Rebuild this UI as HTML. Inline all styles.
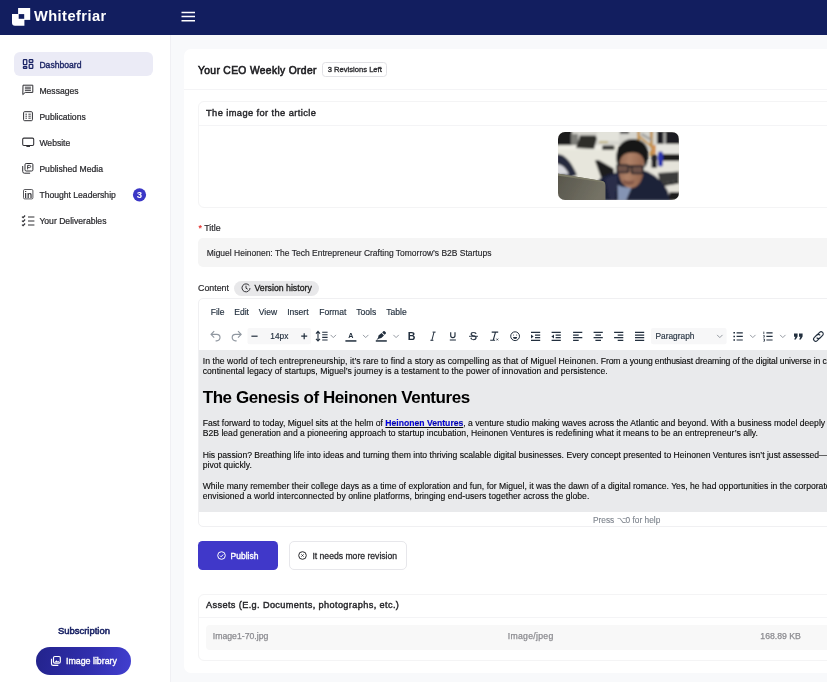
<!DOCTYPE html>
<html lang="en">
<head>
<meta charset="utf-8">
<title>Whitefriar – Your CEO Weekly Order</title>
<style>
*{box-sizing:border-box;margin:0;padding:0}
html,body{width:827px;height:682px;overflow:hidden}
body{will-change:transform;font-family:"Liberation Sans",sans-serif;background:#f8f9fb;color:#1d1d1f;position:relative;-webkit-font-smoothing:antialiased}
.abs{position:absolute}
.t{position:absolute;white-space:nowrap;line-height:1}
/* header */
#hdr{position:absolute;left:0;top:0;width:827px;height:35px;background:#121e5f}
#brand{left:34px;top:8.6px;font-size:14.6px;font-weight:700;color:#fff;letter-spacing:0.45px}
/* sidebar */
#side{position:absolute;left:0;top:35px;width:171px;height:647px;background:#fff;border-right:1px solid #f0f0f4}
.nav{position:absolute;left:14px;width:139px;height:24px;border-radius:6px}
.nav.act{background:#ebebf6}
.nav .lbl{position:absolute;left:25.4px;top:9px;font-size:8.6px;line-height:1;color:#2a2a2e;white-space:nowrap;-webkit-text-stroke:0.22px currentColor}
.nav.act .lbl{color:#1c2566;-webkit-text-stroke:0.35px #1c2566}
.nav svg{position:absolute;left:8px;top:6px;width:12px;height:12px}
/* main card */
#card{position:absolute;left:184px;top:49px;width:700px;height:623.6px;background:#fff;border-radius:7px}
.hr{position:absolute;height:1px;background:#f4f4f6}
.box{position:absolute;border:1px solid #f4f4f5;border-radius:6px;background:#fff}

.mi{top:258.6px;font-size:8.55px;color:#222f3e;-webkit-text-stroke:0.15px #222f3e;margin-left:-0.3px}
#edbody p{position:absolute;left:3.7px;-webkit-text-stroke:0.12px #0a0a0a;font-size:8.62px;line-height:10px;color:#0a0a0a;white-space:nowrap}
#edbody h2{position:absolute;left:3.7px;font-size:17px;line-height:18px;font-weight:700;color:#000;white-space:nowrap;letter-spacing:-0.42px}
#edbody a{color:#0000ee;text-decoration:underline;font-weight:700}
.as{font-size:8.7px;color:#8b8b90;-webkit-text-stroke:0.25px #8b8b90}
</style>
</head>
<body>
<div id="hdr">
  <svg class="abs" style="left:0;top:0" width="40" height="35" viewBox="0 0 40 35">
    <rect x="18.1" y="8" width="12.1" height="11.9" fill="#fff"/>
    <path d="M12 13.9h12.4v11.8H15a3 3 0 0 1-3-3z" fill="#fff"/>
    <rect x="18.7" y="14.1" width="5.5" height="4.7" fill="#121e5f"/>
  </svg>
  <div class="t" id="brand">Whitefriar</div>
  <svg class="abs" style="left:181px;top:11px" width="14" height="12" viewBox="0 0 14 12"><path d="M0.500 1.500h13.500M0.500 5.600h13.500M0.500 9.700h13.500" stroke="#fff" stroke-width="1.500" fill="none"/></svg>
</div>

<div id="side">
  <div class="nav act" style="top:17px"><span class="lbl">Dashboard</span></div>
  <div class="nav" style="top:43px"><span class="lbl">Messages</span></div>
  <div class="nav" style="top:69px"><span class="lbl">Publications</span></div>
  <div class="nav" style="top:95px"><span class="lbl">Website</span></div>
  <div class="nav" style="top:121px"><span class="lbl">Published Media</span></div>
  <div class="nav" style="top:147px"><span class="lbl">Thought Leadership</span></div>
  <div class="nav" style="top:173px"><span class="lbl">Your Deliverables</span></div>
</div>

<div id="card">
  <div class="t" id="ttl" style="left:14px;top:16.9px;font-size:10.3px;letter-spacing:0.34px;color:#1e1e22;-webkit-text-stroke:0.6px #1e1e22">Your CEO Weekly Order</div>
  <div class="abs" id="badge" style="left:138px;top:13px;width:65px;height:15px;border:1px solid #e1e1e5;border-radius:3.5px"></div>
  <div class="t" id="badget" style="left:143.7px;top:17px;font-size:7.62px;color:#2a2a2e;-webkit-text-stroke:0.32px #2a2a2e">3 Revisions Left</div>
  <div class="hr" style="left:0;top:40px;width:700px"></div>

  <!-- image box -->
  <div class="box" style="left:14px;top:52px;width:700px;height:107px"></div>
  <div class="t" id="imgh" style="left:22px;top:59.8px;font-size:9.3px;letter-spacing:0.4px;color:#26262a;-webkit-text-stroke:0.4px #26262a">The image for the article</div>
  <div class="hr" style="left:14px;top:75.5px;width:700px"></div>
  <div class="abs" id="photo" style="left:374.3px;top:82.5px;width:121px;height:68px;border-radius:7px;overflow:hidden;background:#dedcd4">
  <svg width="121" height="68" viewBox="0 0 121 68" style="display:block">
    <defs>
      <filter id="bl" x="-5%" y="-5%" width="110%" height="110%"><feGaussianBlur stdDeviation="0.8"/></filter>
      <filter id="bl2" x="-5%" y="-5%" width="110%" height="110%"><feGaussianBlur stdDeviation="0.5"/></filter>
      <linearGradient id="mon" x1="0" y1="0" x2="1" y2="0.3"><stop offset="0" stop-color="#57554b"/><stop offset="1" stop-color="#747265"/></linearGradient>
      <linearGradient id="skin" x1="0" y1="0" x2="1" y2="0.2"><stop offset="0" stop-color="#8e6450"/><stop offset="0.45" stop-color="#b08268"/><stop offset="1" stop-color="#94664f"/></linearGradient>
    </defs>
    <rect width="121" height="68" fill="#e4e2d9"/>
    <g filter="url(#bl)">
      <!-- back wall / far desks -->
      <rect x="-2" y="-2" width="125" height="15" fill="#d6d5cf"/>
      <rect x="-2" y="-2" width="16" height="15.500" fill="#1d1d1e"/>
      <rect x="13" y="2" width="7" height="11" fill="#7d7d78"/>
      <rect x="39" y="-1" width="22" height="10" fill="#e3e3db"/>
      <rect x="62" y="-1" width="9" height="2.500" fill="#2b2b2d"/>
      <rect x="44" y="13.500" width="12.500" height="4" rx="1.500" fill="#3b3b37"/>
      <rect x="41" y="9.500" width="9" height="1.500" fill="#b5a65e"/>
      <!-- near desk -->
      <path d="M-1 13.500h58l2 4v30H-1z" fill="#e7e6dc"/>
      <path d="M-1 13.500h56v4H-1z" fill="#eeede5"/>
      <path d="M18 16l4-12.500h15.500l1.500 3-3 10.500z" fill="#2f2f2c"/>
      <rect x="44" y="13.500" width="12.500" height="4.500" rx="1.500" fill="#3b3b37"/>
      <!-- rack -->
      <rect x="79.400" y="-1" width="2.400" height="15" fill="#c08c3e"/>
      <rect x="92" y="-1" width="2.600" height="25" fill="#bd8a3d"/>
      <path d="M81 3l11 9v2.500l-11-9z" fill="#c3924a"/>
      <path d="M84 1l10 6-1 2-10-6z" fill="#9a9a98"/>
      <path d="M84 10l9 6v3l-9-6z" fill="#cfcfcb"/>
      <rect x="94.500" y="13" width="3" height="9" fill="#d08a4a"/>
      <!-- right back -->
      <rect x="99" y="-1" width="23" height="13.500" fill="#1f1f20"/>
      <rect x="105.400" y="0" width="2.400" height="12" fill="#b9b9b6"/>
      <rect x="99" y="12" width="23" height="10.500" fill="#e6e5df"/>
      <rect x="105" y="22" width="17" height="7" fill="#1d1d1e"/>
      <rect x="86" y="29" width="36" height="34" fill="#e5e3da"/>
      <rect x="100" y="19.500" width="5" height="15" rx="2" fill="#2a35ae"/>
      <rect x="93.500" y="22.500" width="5.500" height="13.500" rx="1.500" fill="#222226"/>
      <path d="M100 41l21-1.500v9l-19 3.500z" fill="#3a3a3a"/>
      <path d="M102 52l19-3.500v3l-18 3z" fill="#262626"/>
      <path d="M109 68l3-8h10v8z" fill="#1f1f1f"/>
      <!-- left person -->
      <path d="M-1 22c8 0 15 9 20 21l-6 2H-1z" fill="#262a3c"/>
      <path d="M-1 32c5 .5 9 4 12 10.500H-1z" fill="#d9d9de"/>
      <!-- chair behind -->
      <path d="M37 28.500l3.500-.5 15 8.500 1 9H43z" fill="#1b1b1f"/>
      <!-- sweater -->
      <path d="M38 51c5-7 13-9.500 21-10.500l27-2c10 3 19 11 24 21l2 9H40z" fill="#1e2138"/>
      <path d="M47 47c4-3 9-4 13-4.500l-3 25h-5z" fill="#2a2e4a"/>
      <!-- t-shirt -->
      <path d="M59.500 52.500c4 3 10 4 15 1l-6.500 15H60z" fill="#8594b4"/>
      <!-- face -->
      <path d="M60.500 30c0-7 5-11 12.500-11s13 4 13 11l-1 12c-1 8-6 14-12 14s-11-6-12-14z" fill="url(#skin)"/>
      <!-- hair -->
      <path d="M59.500 33c-4-14 3-26 15-26 13 0 19 10 14.500 25l-2.500 4c.5-10-3-15.500-12-15.500-8 0-13 3.500-13 12.500z" fill="#151517"/>
      <!-- glasses -->
      <path d="M58.500 32.500l27.500 1.500v2l-27.500-1.500z" fill="#1b1b22"/>
      <rect x="59" y="33" width="11.500" height="7.500" rx="1.800" fill="#6e5248" stroke="#1e1e26" stroke-width="1.700"/>
      <rect x="73.500" y="34" width="11.500" height="7.500" rx="1.800" fill="#6e5248" stroke="#1e1e26" stroke-width="1.700"/>
      <!-- mouth / beard shade -->
      <path d="M64.500 47.500c3 1.500 8 2 12 .5l-1 4c-3 1.500-7 1.500-10 0z" fill="#85594a"/>
    </g>
    <g filter="url(#bl2)">
      <path d="M-1 41.500l44 7.300c3 .5 4.500 2 4.500 5V69H-1z" fill="url(#mon)"/>
      <path d="M-1 41.500l44 7.300c2 .3 3.300 1 4 2.500l-1.500.5c-.6-1-1.500-1.500-3-1.700L-1 43.500z" fill="#7d7b68"/>
    </g>
  </svg>
</div>

  <!-- title -->
  <div class="t" style="left:14.600px;top:175.300px;font-size:8.800px;font-weight:700;color:#e53935">*</div>
  <div class="t" id="titlel" style="left:20.2px;top:174.9px;font-size:8.85px;color:#2a2a2e;-webkit-text-stroke:0.2px #2a2a2e">Title</div>
  <div class="abs" style="left:14px;top:189px;width:700px;height:29px;background:#f5f5f5;border-radius:5px"></div>
  <div class="t" id="titlev" style="left:22.7px;top:199.6px;font-size:8.49px;color:#26262a;-webkit-text-stroke:0.15px #26262a">Miguel Heinonen: The Tech Entrepreneur Crafting Tomorrow’s B2B Startups</div>

  <!-- content label -->
  <div class="t" id="contl" style="left:14px;top:234.8px;font-size:8.85px;color:#2a2a2e;-webkit-text-stroke:0.2px #2a2a2e">Content</div>
  <div class="abs" style="left:50px;top:232px;width:84.7px;height:14.6px;background:#e8e8ea;border-radius:8px"></div>
  <svg class="abs" style="left:56.6px;top:234.4px" width="10" height="10" viewBox="0 0 10 10"><path d="M8.3 2.6A4 4 0 1 0 9 5" fill="none" stroke="#2a2a2e" stroke-width=".95"/><path d="M5 2.7v2.500l1.700 1" fill="none" stroke="#2a2a2e" stroke-width=".95"/></svg>
  <div class="t" id="verh" style="left:70.5px;top:234.8px;font-size:8.74px;color:#222;-webkit-text-stroke:0.3px #222">Version history</div>

  <!-- editor -->
  <div class="box" style="left:14px;top:249px;width:700px;height:229px;border-radius:5px;border-color:#f0f0f2"></div>
  <div id="menubar">
    <span class="t mi" style="left:27px">File</span>
    <span class="t mi" style="left:50.5px">Edit</span>
    <span class="t mi" style="left:75px">View</span>
    <span class="t mi" style="left:103.5px">Insert</span>
    <span class="t mi" style="left:135.5px">Format</span>
    <span class="t mi" style="left:172.5px">Tools</span>
    <span class="t mi" style="left:202.5px">Table</span>
  </div>
  
  <div class="abs" id="edbody" style="left:15px;top:301px;width:699px;height:162px;background:#e9eaec;overflow:hidden">
    <p style="top:5.5px"><span style="letter-spacing:0.059px">In the world of tech entrepreneurship, it’s rare to find a story as compelling as that of Miguel Heinonen. </span><span style="letter-spacing:-0.11px">From a young enthusiast dreaming of the digital universe in cross-</span><br><span style="letter-spacing:0.038px">continental legacy of startups, Miguel’s journey is a testament to the power of innovation and persistence.</span></p>
    <h2 style="top:38.8px">The Genesis of Heinonen Ventures</h2>
    <p style="top:67.8px">Fast forward to today, Miguel sits at the helm of <a>Heinonen Ventures</a>, a venture studio making waves across the Atlantic and beyond. With a business model deeply rooted in<br><span style="letter-spacing:0.01px">B2B lead generation and a pioneering approach to startup incubation, Heinonen Ventures is redefining what it means to be an entrepreneur’s ally.</span></p>
    <p style="top:99.6px">His passion? Breathing life into ideas and turning them into thriving scalable digital businesses. Every concept presented to Heinonen Ventures isn’t just assessed—it’s<br><span style="letter-spacing:0.04px">pivot quickly.</span></p>
    <p style="top:131.2px;letter-spacing:0.009px">While many remember their college days as a time of exploration and fun, for Miguel, it was the dawn of a digital romance. Yes, he had opportunities in the corporate world, but he<br><span style="letter-spacing:0.038px">envisioned a world interconnected by online platforms, bringing end-users together across the globe.</span></p>
  </div>
  <div class="t" id="help" style="left:409px;top:466.5px;font-size:8.34px;color:#7f858e;-webkit-text-stroke:0.12px #7f858e">Press ⌥0 for help</div>

  <!-- buttons -->
  <div class="abs" style="left:14px;top:492px;width:80px;height:29px;background:#4038c9;border-radius:4.5px"></div>
  <svg class="abs" style="left:32.5px;top:502px" width="9" height="9" viewBox="0 0 9 9"><circle cx="4.5" cy="4.5" r="3.8" fill="none" stroke="#fff" stroke-width="1"/><path d="M2.900 4.600l1.200 1.200 2.100-2.300" fill="none" stroke="#fff" stroke-width="1"/></svg>
  <div class="t" id="pub" style="left:46.6px;top:502.5px;font-size:8.48px;color:#fff;-webkit-text-stroke:0.35px #fff">Publish</div>
  <div class="abs" style="left:104.8px;top:492px;width:118.4px;height:29px;background:#fff;border:1px solid #e7e7eb;border-radius:5px"></div>
  <svg class="abs" style="left:114px;top:502px" width="9" height="9" viewBox="0 0 9 9"><circle cx="4.5" cy="4.5" r="3.8" fill="none" stroke="#2a2a2e" stroke-width="1"/><path d="M3.400 3.400l2.200 2.200M5.600 3.400L3.400 5.600" fill="none" stroke="#2a2a2e" stroke-width=".9"/></svg>
  <div class="t" id="rev" style="left:128.4px;top:502.5px;font-size:8.62px;color:#2a2a2e;-webkit-text-stroke:0.28px #2a2a2e">It needs more revision</div>

  <!-- assets -->
  <div class="box" style="left:14px;top:545px;width:700px;height:67px"></div>
  <div class="t" id="assh" style="left:22px;top:551.6px;font-size:9.2px;letter-spacing:0.37px;color:#26262a;-webkit-text-stroke:0.4px #26262a">Assets (E.g. Documents, photographs, etc.)</div>
  <div class="hr" style="left:14px;top:568px;width:700px"></div>
  <div class="abs" style="left:21.5px;top:575.5px;width:700px;height:25.3px;background:#f8f8f8;border-radius:4px"></div>
  <div class="t as" id="as1" style="left:28.8px;top:583px">Image1-70.jpg</div>
  <div class="t as" id="as2" style="left:323.7px;top:583px;letter-spacing:0.29px">Image/jpeg</div>
  <div class="t as" id="as3" style="left:576.3px;top:583px">168.89 KB</div>
</div>

<svg class="abs" id="tb" style="left:0;top:0;pointer-events:none" width="827" height="682" viewBox="0 0 827 682" font-family="Liberation Sans, sans-serif">
<path d="M214.2 331.2l-3.2 3.2 3.2 3.2M211.2 334.4h5.6a3.2 3.2 0 0 1 0 6.4h-1.2" fill="none" stroke="#9097a0" stroke-width="1.15" stroke-linejoin="round"/>
<path d="M238 331.2l3.2 3.2-3.2 3.2M241 334.4h-5.6a3.2 3.2 0 0 0 0 6.4h1.2" fill="none" stroke="#9097a0" stroke-width="1.15" stroke-linejoin="round"/>
<rect x="247.5" y="328" width="63.5" height="16.2" rx="2" fill="#f7f7f8"/>
<path d="M251.4 336.2h6.2" stroke="#222f3e" stroke-width="1.2"/>
<path d="M301.2 336.2h6M304.2 333.2v6" stroke="#222f3e" stroke-width="1.2"/>
<text x="279.3" y="339.3" font-size="8.3" fill="#222f3e" stroke="#222f3e" stroke-width=".15" text-anchor="middle">14px</text>
<path d="M318 331.6v9.2M316 333.6l2-2.2 2 2.2M316 338.8l2 2.2 2-2.2" fill="none" stroke="#222f3e" stroke-width="1.1"/>
<path d="M322.2 332.2h5.400M322.2 334.800h5.400M322.2 337.400h5.400M322.2 340h5.400" stroke="#222f3e" stroke-width="1.100"/>
<path d="M330.6 334.9l2.7 2.7 2.7-2.7" fill="none" stroke="#8a9099" stroke-width="0.9"/>
<text x="350.9" y="338.3" font-size="7.2" font-weight="700" fill="#222f3e" text-anchor="middle">A</text>
<rect x="345.4" y="340.2" width="11" height="1.5" fill="#222f3e"/>
<path d="M363.0 334.9l2.7 2.7 2.7-2.7" fill="none" stroke="#8a9099" stroke-width="0.9"/>
<path d="M383.300 331.300a1 1 0 0 1 1.400 0l1 1a1 1 0 0 1 0 1.400l-1.100 1.100-2.400-2.400zM381.600 333l2.400 2.400-2.700 2.700-2.600.6-.9.900h-1.300l1.500-1.700.5-2.300z" fill="#222f3e"/>
<rect x="375.8" y="340.2" width="11" height="1.5" fill="#222f3e"/>
<path d="M393.40000000000003 334.9l2.7 2.7 2.7-2.7" fill="none" stroke="#8a9099" stroke-width="0.9"/>
<text x="411.5" y="339.9" font-size="10.6" font-weight="700" fill="#222f3e" text-anchor="middle">B</text>
<path d="M434 332.100L431.900 340.300M432.600 332.100h3M430.400 340.300h3" fill="none" stroke="#222f3e" stroke-width="1"/>
<path d="M450.700 332.300v3.100a2.150 2.150 0 0 0 4.300 0v-3.100" fill="none" stroke="#222f3e" stroke-width="1.150"/><path d="M449.800 340h6.100" stroke="#222f3e" stroke-width="1.050"/>
<text x="473.5" y="340" font-size="10.4" fill="#222f3e" stroke="#222f3e" stroke-width=".25" text-anchor="middle">S</text><path d="M469 336.3h9" stroke="#222f3e" stroke-width="0.9"/>
<path d="M491.700 332.100h6.500M495.500 332.100L493.300 340M490.200 340.300h4.800" fill="none" stroke="#222f3e" stroke-width="1.100"/><path d="M496.400 338.600l1.800 1.800M498.200 338.600l-1.800 1.800" stroke="#222f3e" stroke-width=".8"/>
<circle cx="515.1" cy="336.2" r="4.4" fill="none" stroke="#222f3e" stroke-width="1"/><path d="M513 337h4.200a2.100 2.100 0 0 1-4.200 0z" fill="#222f3e"/><circle cx="513.600" cy="335" r=".5" fill="#222f3e"/><circle cx="516.600" cy="335" r=".5" fill="#222f3e"/>
<path d="M531 332.4h9.2M535 335.1h5.2M535 337.7h5.2M531 340.4h9.2" stroke="#222f3e" stroke-width="1.2"/><path d="M531 334.4l2.6 2-2.6 2z" fill="#222f3e"/>
<path d="M551.6 332.4h9.2M555.6 335.1h5.2M555.6 337.7h5.2M551.6 340.4h9.2" stroke="#222f3e" stroke-width="1.2"/><path d="M554 334.4l-2.6 2 2.6 2z" fill="#222f3e"/>
<path d="M573.1 332.4h9.2M573.1 335.1h5.6M573.1 337.7h9.2M573.1 340.4h5.6" stroke="#222f3e" stroke-width="1.2"/>
<path d="M593.6 332.4h9.2M595.4 335.1h5.6M593.6 337.7h9.2M595.4 340.4h5.6" stroke="#222f3e" stroke-width="1.2"/>
<path d="M614.1 332.4h9.2M617.7 335.1h5.6M614.1 337.7h9.2M617.7 340.4h5.6" stroke="#222f3e" stroke-width="1.2"/>
<path d="M635 332.4h9.2M635 335.1h9.2M635 337.7h9.2M635 340.4h9.2" stroke="#222f3e" stroke-width="1.2"/>
<rect x="651" y="328" width="75.6" height="16.2" rx="2" fill="#f7f7f8"/>
<text x="655.5" y="339.3" font-size="8.35" fill="#222f3e" stroke="#222f3e" stroke-width=".12">Paragraph</text>
<path d="M717.0999999999999 334.9l2.7 2.7 2.7-2.7" fill="none" stroke="#8a9099" stroke-width="0.9"/>
<path d="M736.6 332.8h6.2M736.6 336.4h6.2M736.6 340h6.2" stroke="#222f3e" stroke-width="1.2"/><path d="M733.4 332.8h1.6M733.4 336.4h1.6M733.4 340h1.6" stroke="#222f3e" stroke-width="1.5"/>
<path d="M750.0999999999999 334.9l2.7 2.7 2.7-2.7" fill="none" stroke="#8a9099" stroke-width="0.9"/>
<path d="M766.4 332.8h6.2M766.4 336.4h6.2M766.4 340h6.2" stroke="#222f3e" stroke-width="1.2"/><path d="M763.8 331.6v2.4M763.3 335.4h1v1.8h-1M763.3 339h1.2v2.2h-1.2" fill="none" stroke="#222f3e" stroke-width="0.8"/>
<path d="M780.0999999999999 334.9l2.7 2.7 2.7-2.7" fill="none" stroke="#8a9099" stroke-width="0.9"/>
<path d="M794 333.6h3.6v3l-1.8 2.8h-1.6l1.2-2.6H794zM799 333.6h3.6v3l-1.8 2.8h-1.6l1.2-2.6H799z" fill="#222f3e"/>
<g fill="none" stroke="#222f3e" stroke-width="1.1" stroke-linecap="round"><path d="M817.4 334.6l2.2-2.2a2.1 2.1 0 0 1 3 3l-2.6 2.6a2.1 2.1 0 0 1-3 0"/><path d="M819.4 338.4l-2.2 2.2a2.1 2.1 0 0 1-3-3l2.6-2.6a2.1 2.1 0 0 1 3 0"/></g>
</svg>
<!-- sidebar bottom -->
<div class="t" id="subs" style="left:58px;top:626px;font-size:9.45px;color:#1c2566;-webkit-text-stroke:0.55px #1c2566">Subscription</div>
<div class="abs" style="left:36.200px;top:646.500px;width:94.900px;height:28.700px;border-radius:14.400px;background:linear-gradient(100deg,#23238c 0%,#302eac 55%,#423fd0 100%)"></div>
<div class="t" id="imglib" style="left:66px;top:656.5px;font-size:8.82px;color:#fff;-webkit-text-stroke:0.35px #fff">Image library</div>
<svg class="abs" id="sideicons" style="left:0;top:0;pointer-events:none" width="180" height="682" viewBox="0 0 180 682" font-family="Liberation Sans, sans-serif">
<g fill="none" stroke="#1c2566" stroke-width="1.25"><rect x="23.4" y="59.7" width="3.4" height="4.9" rx=".6"/><rect x="29.2" y="59.7" width="3.6" height="2.6" rx=".6"/><rect x="23.4" y="66.6" width="3.4" height="1.8" rx=".5"/><rect x="29.2" y="64.3" width="3.6" height="4.1" rx=".6"/></g>
<path d="M23 85.2h9.8v7.2h-7.6l-2.4 2.2z" fill="none" stroke="#2e2e33" stroke-width="1" stroke-linejoin="round"/><path d="M24.9 87.2h6M24.9 88.8h6M24.9 90.4h6" stroke="#2e2e33" stroke-width=".9"/>
<rect x="23.6" y="111.7" width="8.8" height="9" rx="1" fill="none" stroke="#2e2e33" stroke-width="1"/><path d="M25.4 114.2h1.6M28.4 114.2h2.4M25.4 116.2h1.6M28.4 116.2h2.4M25.4 118.2h1.6M28.4 118.2h2.4" stroke="#2e2e33" stroke-width=".9"/>
<rect x="22.7" y="138.1" width="11" height="7.3" rx="1.2" fill="none" stroke="#2e2e33" stroke-width="1.05"/><path d="M26.4 146.4h3.6" stroke="#2e2e33" stroke-width="1.1"/>
<rect x="25" y="163.5" width="7.9" height="7.5" rx="1.2" fill="none" stroke="#2e2e33" stroke-width="1"/><path d="M22.7 166v5.4a1.8 1.8 0 0 0 1.8 1.8h5.6" fill="none" stroke="#2e2e33" stroke-width="1"/><path d="M27.6 169.4v-4h2a1.1 1.1 0 0 1 0 2.2h-2" fill="none" stroke="#2e2e33" stroke-width=".9"/>
<rect x="23.5" y="189.500" width="9.400" height="9.400" rx="1.200" fill="none" stroke="#2e2e33" stroke-width=".8"/><text x="28.3" y="197.600" font-size="8.4" font-weight="700" fill="#2e2e33" text-anchor="middle">in</text>
<path d="M22 216.6l1.1 1.1 2-2.2M22 220.6l1.1 1.1 2-2.2M22 224.6l1.1 1.1 2-2.2" fill="none" stroke="#2e2e33" stroke-width="1.150"/><path d="M28 217h6.400M28 221h6.400M28 225h6.400" stroke="#2e2e33" stroke-width="1.200"/>
<circle cx="139.5" cy="194.8" r="6.6" fill="#3b37c6"/><text x="139.5" y="198.2" font-size="9.6" font-weight="700" fill="#fff" text-anchor="middle">3</text>
<rect x="53.500" y="656.500" width="6.800" height="6.600" rx="1.300" fill="none" stroke="#fff" stroke-width="1.150"/><path d="M51.500 658.700v5a1.600 1.600 0 0 0 1.600 1.600h5.200" fill="none" stroke="#fff" stroke-width="1.150"/><path d="M54.600 662.300l1.700-2 1.300 1.300.8-.7 1.100 1.400z" fill="#fff"/>
</svg>
</body>
</html>
